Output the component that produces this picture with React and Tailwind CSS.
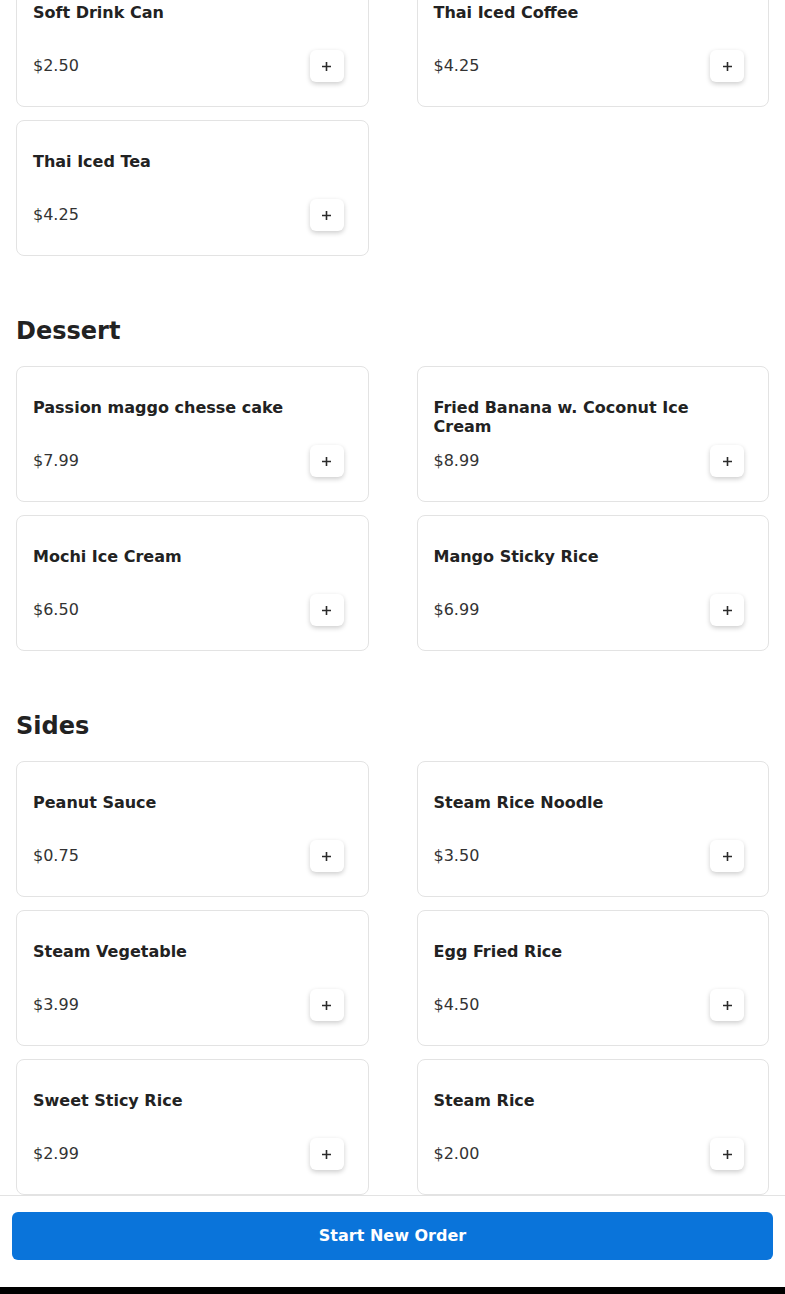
import React from "react";

const drinks = [
  { name: "Soft Drink Can", price: "2.50" },
  { name: "Thai Iced Coffee", price: "4.25" },
  { name: "Thai Iced Tea", price: "4.25" },
];

const sections = [
  {
    title: "Dessert",
    items: [
      { name: "Passion maggo chesse cake", price: "7.99" },
      { name: "Fried Banana w. Coconut Ice Cream", price: "8.99" },
      { name: "Mochi Ice Cream", price: "6.50" },
      { name: "Mango Sticky Rice", price: "6.99" },
    ],
  },
  {
    title: "Sides",
    items: [
      { name: "Peanut Sauce", price: "0.75" },
      { name: "Steam Rice Noodle", price: "3.50" },
      { name: "Steam Vegetable", price: "3.99" },
      { name: "Egg Fried Rice", price: "4.50" },
      { name: "Sweet Sticy Rice", price: "2.99" },
      { name: "Steam Rice", price: "2.00" },
    ],
  },
];

const PlusIcon = () => (
  <svg width="11" height="11" viewBox="0 0 11 11" fill="none">
    <path d="M5.5 1v9M1 5.5h9" stroke="#2a2a2a" strokeWidth="1.6" />
  </svg>
);

const MenuCard = ({ item }) => (
  <div className="h-[136px] rounded-lg border border-[#e3e3e3] bg-white pt-[31px] pr-6 pb-6 pl-4">
    <h3 className="h-[38px] text-base leading-[19px] font-bold text-[#222]">{item.name}</h3>
    <div className="mt-[9px] flex h-8 items-center justify-between">
      <span className="text-base text-[#333]">${item.price}</span>
      <button
        type="button"
        className="flex h-8 w-[34px] items-center justify-center rounded-md bg-white shadow-[0_2px_5px_rgba(0,0,0,0.2)]"
      >
        <PlusIcon />
      </button>
    </div>
  </div>
);

export default function App() {
  return (
    <div
      className="relative h-[1294px] overflow-hidden bg-white"
      style={{ fontFamily: '"DejaVu Sans", sans-serif' }}
    >
      <div className="-mt-[29px] px-4">
        <div className="grid grid-cols-2 gap-x-12 gap-y-[13px]">
          {drinks.map((item) => (
            <MenuCard key={item.name} item={item} />
          ))}
        </div>

        {sections.map((section) => (
          <section key={section.title} className="mt-[59px]">
            <h2 className="mb-[19px] text-2xl leading-8 font-bold text-[#222]">{section.title}</h2>
            <div className="grid grid-cols-2 gap-x-12 gap-y-[13px]">
              {section.items.map((item) => (
                <MenuCard key={item.name} item={item} />
              ))}
            </div>
          </section>
        ))}
      </div>

      <div className="absolute right-0 bottom-0 left-0 border-t border-[#e3e3e3] bg-white">
        <div className="px-3 pt-4 pb-[27px]">
          <button
            type="button"
            className="h-12 w-full rounded-md bg-[#0a74da] text-base font-bold text-white"
          >
            Start New Order
          </button>
        </div>
        <div className="h-[7px] bg-black" />
      </div>
    </div>
  );
}
